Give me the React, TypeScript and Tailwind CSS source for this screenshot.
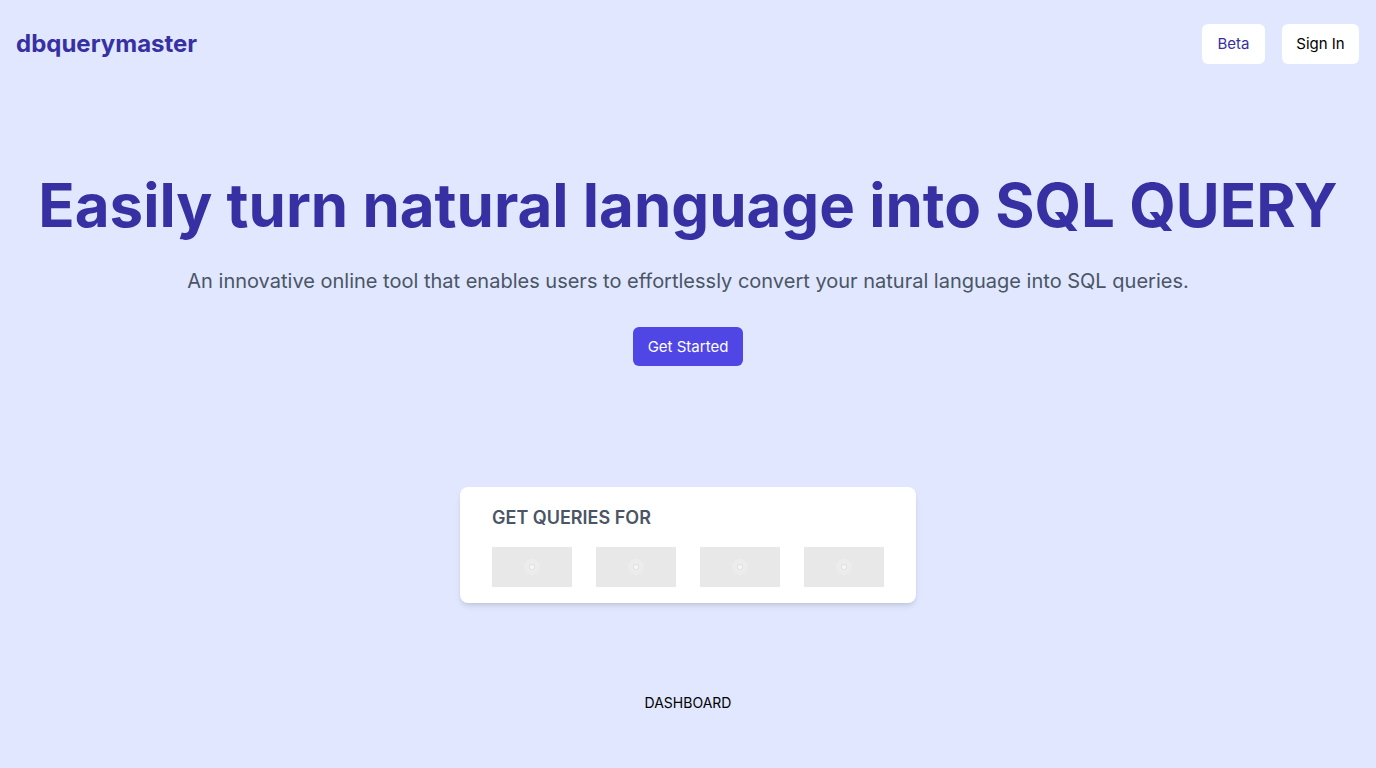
export default function App() {
  const tiles = [0, 1, 2, 3]

  return (
    <div className="min-h-screen bg-[#e0e7ff] font-['Inter',sans-serif] flex flex-col">
      <nav className="flex items-center justify-between pl-4 pr-[17px] pt-6">
        <span className="text-2xl font-bold text-[#3730a3] leading-none">dbquerymaster</span>
        <div className="flex items-center gap-[17px]">
          <button className="h-10 w-[63px] flex items-center justify-center rounded-md bg-white text-[15px] text-[#3730a3]">
            Beta
          </button>
          <button className="h-10 w-[77px] flex items-center justify-center rounded-md bg-white text-[15px] text-black">
            Sign In
          </button>
        </div>
      </nav>

      <main className="flex flex-col items-center pt-[111px]">
        <h1 className="text-6xl leading-none font-bold text-[#3730a3]">
          Easily turn natural language into SQL QUERY
        </h1>
        <p className="mt-8 text-xl text-gray-600">
          An innovative online tool that enables users to effortlessly convert your natural language into SQL queries.
        </p>
        <button className="mt-8 h-[39px] w-[110px] rounded-md bg-[#4f46e5] text-white text-[15px] pt-px">Get Started</button>

        <div className="mt-[121px] w-[456px] bg-white rounded-lg shadow-md px-8 pt-[17px] pb-4">
          <h2 className="text-lg font-semibold text-gray-600">GET QUERIES FOR</h2>
          <div className="mt-[15px] flex gap-6">
            {tiles.map((t) => (
              <div key={t} className="w-20 h-10 bg-[#e8e8e8] flex items-center justify-center">
                <div className="w-4 h-4 rounded-full bg-[#ececec] flex items-center justify-center">
                  <div className="w-1 h-1 rounded-full bg-[#f8f8f8] ring-1 ring-[#e2e2e2]" />
                </div>
              </div>
            ))}
          </div>
        </div>

        <div className="mt-[90px] text-sm text-black">DASHBOARD</div>
      </main>
    </div>
  )
}
